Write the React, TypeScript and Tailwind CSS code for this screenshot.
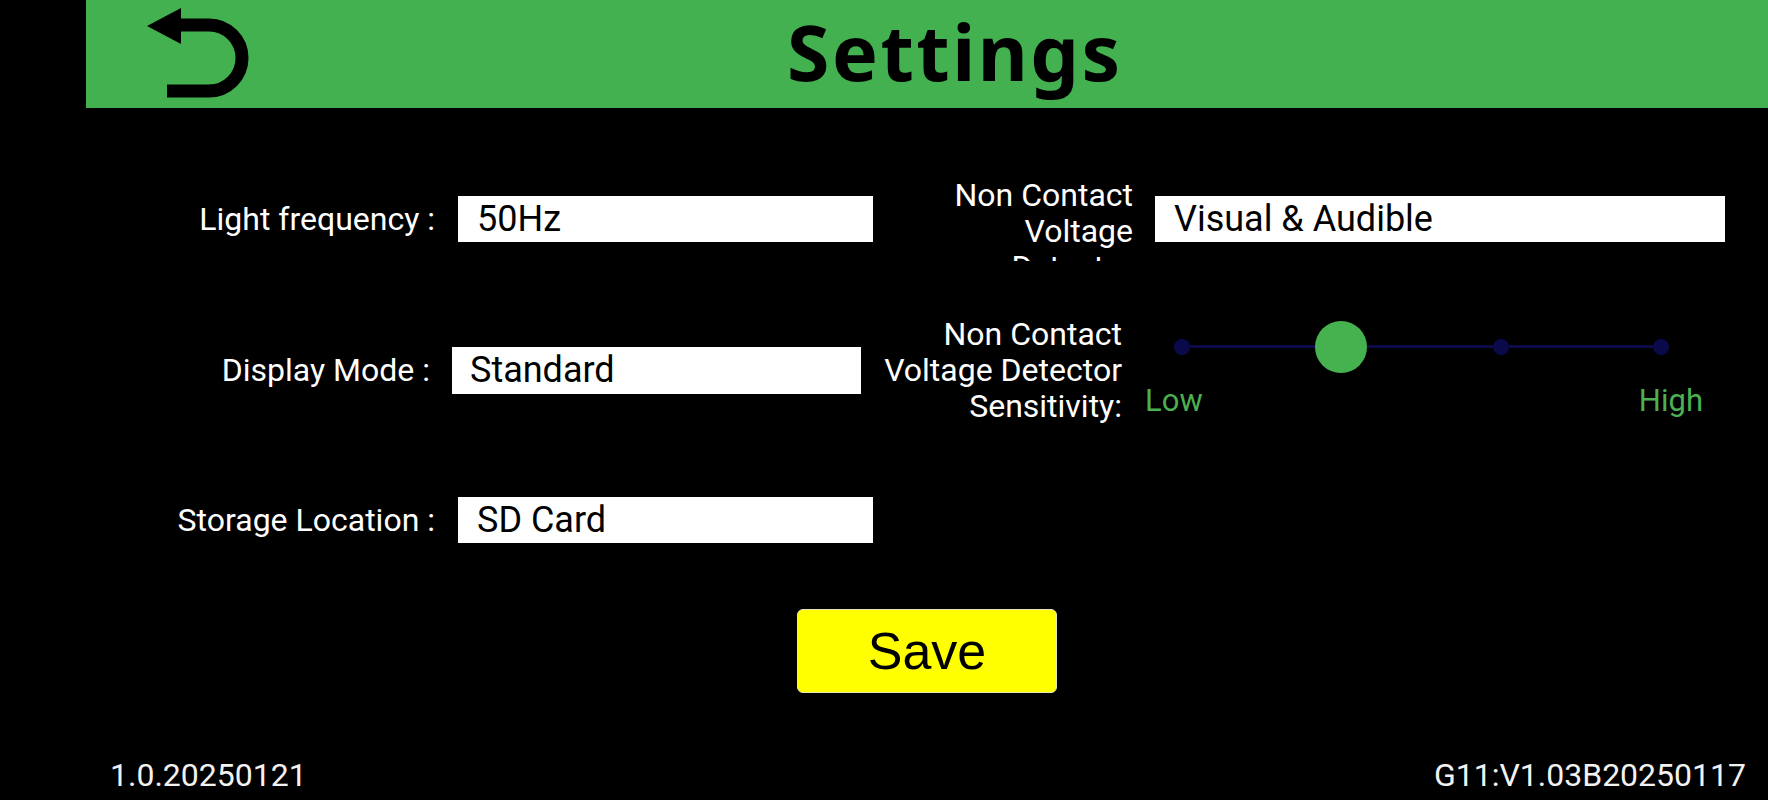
import React from 'react';

function BackIcon() {
  return (
    <svg width="104" height="92" viewBox="0 0 104 92" className="shrink-0">
      <polygon points="0,18 34,0 34,36" fill="#000" />
      <path d="M30 17 H62 A33 33 0 0 1 62 83 H20" fill="none" stroke="#000" strokeWidth="13" />
    </svg>
  );
}

function ValueBox({ value, width }: { value: string; width: string }) {
  return (
    <div className={`${width} h-[46px] bg-white flex items-center pl-[19px] text-[36px] text-black leading-none`}>
      {value}
    </div>
  );
}

function SensitivitySlider() {
  const stops = [37, 196, 356, 516];
  const active = 1;
  return (
    <div className="w-[558px] flex flex-col">
      <div className="relative h-[52px]">
        <div className="absolute left-[37px] w-[479px] top-[24px] h-[3px] bg-[#0b0b48]" />
        {stops.map((x, i) =>
          i === active ? (
            <div
              key={i}
              className="absolute top-0 w-[52px] h-[52px] rounded-full bg-[#45b14f]"
              style={{ left: x - 26 }}
            />
          ) : (
            <div
              key={i}
              className="absolute top-[18px] w-[16px] h-[16px] rounded-full bg-[#0a0a4a]"
              style={{ left: x - 8 }}
            />
          )
        )}
      </div>
      <div className="mt-[10px] flex justify-between text-[31px] leading-[36px] text-[#4caf50]">
        <span>Low</span>
        <span>High</span>
      </div>
    </div>
  );
}

export default function App() {
  return (
    <div className="w-[1768px] h-[800px] bg-black flex overflow-hidden font-['Roboto',sans-serif]">
      <div className="w-[86px] shrink-0" />
      <div className="flex-1 flex flex-col">
        {/* header */}
        <div className="h-[108px] bg-[#43b14f] flex items-center">
          <div className="ml-[61px]">
            <BackIcon />
          </div>
          <h1 className="ml-[536px] text-[77px] font-bold text-black leading-none font-['Noto_Sans',sans-serif] tracking-[2.5px] -mt-[6px]">
            Settings
          </h1>
        </div>

        {/* row 1 */}
        <div className="mt-[69px] flex items-center text-white text-[32px] leading-[36px]">
          <div className="w-[349px] text-right">Light frequency :</div>
          <div className="ml-[23px]">
            <ValueBox value="50Hz" width="w-[415px]" />
          </div>
          <div className="w-[260px] h-[84px] overflow-hidden text-right">
            Non Contact
            <br />
            Voltage
            <br />
            Detector
          </div>
          <div className="ml-[22px]">
            <ValueBox value="Visual & Audible" width="w-[570px]" />
          </div>
        </div>

        {/* row 2 */}
        <div className="mt-[55px] flex items-center text-white text-[32px] leading-[36px]">
          <div className="w-[344px] text-right">Display Mode :</div>
          <div className="ml-[22px]">
            <div className="w-[409px] h-[47px] bg-white flex items-center pl-[18px] text-[36px] text-black leading-none">
              Standard
            </div>
          </div>
          <div className="w-[261px] text-right">
            Non Contact
            <br />
            Voltage Detector
            <br />
            Sensitivity:
          </div>
          <div className="ml-[23px]">
            <SensitivitySlider />
          </div>
        </div>

        {/* row 3 */}
        <div className="mt-[73px] flex items-center text-white text-[32px] leading-[36px]">
          <div className="w-[349px] text-right">Storage Location :</div>
          <div className="ml-[23px]">
            <ValueBox value="SD Card" width="w-[415px]" />
          </div>
        </div>

        {/* save */}
        <div className="mt-[66px] flex justify-center">
          <button className="w-[260px] h-[84px] bg-[#ffff00] rounded-[6px] border border-[#e6e6b0] text-black text-[52px] leading-none font-['Liberation_Sans',Arial,sans-serif]">
            Save
          </button>
        </div>

        {/* versions */}
        <div className="mt-[64px] flex justify-between pl-[24px] pr-[22px] text-[32px] leading-[36px] text-[#f2f2f2]">
          <span>1.0.20250121</span>
          <span>G11:V1.03B20250117</span>
        </div>
      </div>
    </div>
  );
}
